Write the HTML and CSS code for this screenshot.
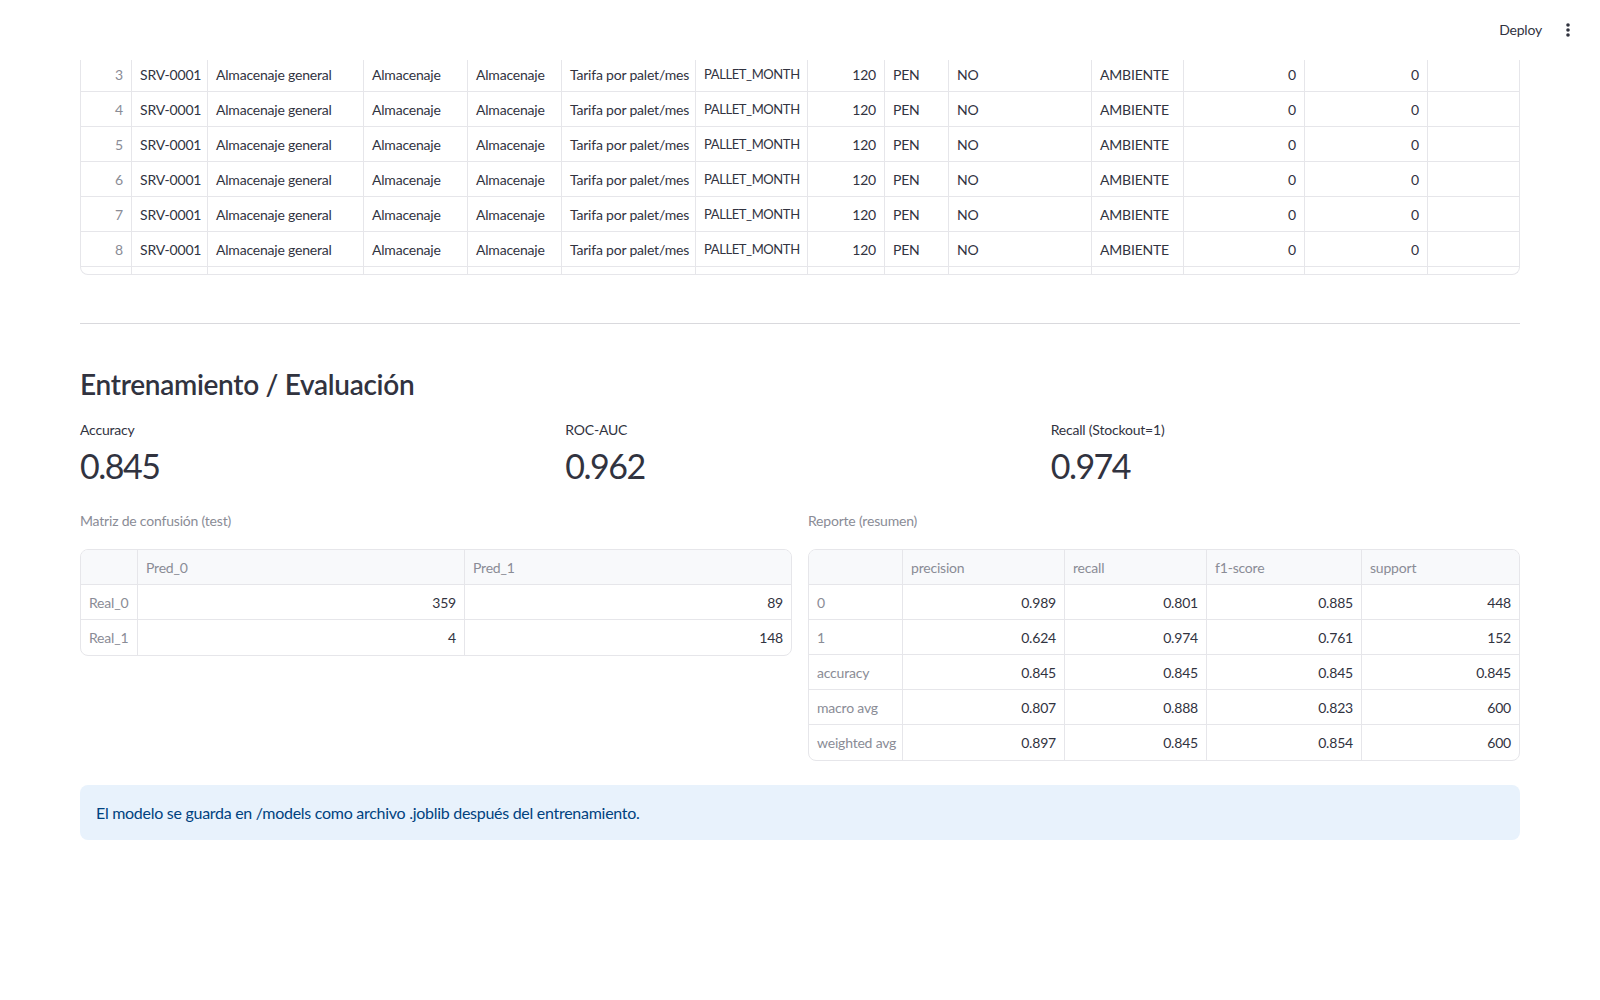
FILE: index.html
```html
<!DOCTYPE html>
<html lang="es">
  <head>
    <meta charset="UTF-8" />
    <meta name="viewport" content="width=device-width, initial-scale=1.0" />
    <title>Entrenamiento / Evaluación</title>
    <link rel="stylesheet" href="styles.css">
  </head>
  <body>
    <header class="app-header">
      <button class="deploy-btn">Deploy</button>
      <button class="menu-btn" aria-label="Menu">
        <svg width="24" height="24" viewBox="0 0 24 24">
          <circle cx="12" cy="7" r="1.8" fill="#31333f" />
          <circle cx="12" cy="12" r="1.8" fill="#31333f" />
          <circle cx="12" cy="17" r="1.8" fill="#31333f" />
        </svg>
      </button>
    </header>

    <main class="main">
      <!-- services dataframe, scrolled under the header -->
      <div class="frame frame-scrolled">
        <div class="row cols-services"><div class="cell idx num">3</div><div class="cell">SRV-0001</div><div class="cell">Almacenaje general</div><div class="cell">Almacenaje</div><div class="cell">Almacenaje</div><div class="cell">Tarifa por palet/mes</div><div class="cell code">PALLET_MONTH</div><div class="cell num">120</div><div class="cell">PEN</div><div class="cell">NO</div><div class="cell">AMBIENTE</div><div class="cell num">0</div><div class="cell num">0</div><div class="cell"></div></div>
        <div class="row cols-services"><div class="cell idx num">4</div><div class="cell">SRV-0001</div><div class="cell">Almacenaje general</div><div class="cell">Almacenaje</div><div class="cell">Almacenaje</div><div class="cell">Tarifa por palet/mes</div><div class="cell code">PALLET_MONTH</div><div class="cell num">120</div><div class="cell">PEN</div><div class="cell">NO</div><div class="cell">AMBIENTE</div><div class="cell num">0</div><div class="cell num">0</div><div class="cell"></div></div>
        <div class="row cols-services"><div class="cell idx num">5</div><div class="cell">SRV-0001</div><div class="cell">Almacenaje general</div><div class="cell">Almacenaje</div><div class="cell">Almacenaje</div><div class="cell">Tarifa por palet/mes</div><div class="cell code">PALLET_MONTH</div><div class="cell num">120</div><div class="cell">PEN</div><div class="cell">NO</div><div class="cell">AMBIENTE</div><div class="cell num">0</div><div class="cell num">0</div><div class="cell"></div></div>
        <div class="row cols-services"><div class="cell idx num">6</div><div class="cell">SRV-0001</div><div class="cell">Almacenaje general</div><div class="cell">Almacenaje</div><div class="cell">Almacenaje</div><div class="cell">Tarifa por palet/mes</div><div class="cell code">PALLET_MONTH</div><div class="cell num">120</div><div class="cell">PEN</div><div class="cell">NO</div><div class="cell">AMBIENTE</div><div class="cell num">0</div><div class="cell num">0</div><div class="cell"></div></div>
        <div class="row cols-services"><div class="cell idx num">7</div><div class="cell">SRV-0001</div><div class="cell">Almacenaje general</div><div class="cell">Almacenaje</div><div class="cell">Almacenaje</div><div class="cell">Tarifa por palet/mes</div><div class="cell code">PALLET_MONTH</div><div class="cell num">120</div><div class="cell">PEN</div><div class="cell">NO</div><div class="cell">AMBIENTE</div><div class="cell num">0</div><div class="cell num">0</div><div class="cell"></div></div>
        <div class="row cols-services"><div class="cell idx num">8</div><div class="cell">SRV-0001</div><div class="cell">Almacenaje general</div><div class="cell">Almacenaje</div><div class="cell">Almacenaje</div><div class="cell">Tarifa por palet/mes</div><div class="cell code">PALLET_MONTH</div><div class="cell num">120</div><div class="cell">PEN</div><div class="cell">NO</div><div class="cell">AMBIENTE</div><div class="cell num">0</div><div class="cell num">0</div><div class="cell"></div></div>
        <div class="row cols-services"><div class="cell idx num"></div><div class="cell"></div><div class="cell"></div><div class="cell"></div><div class="cell"></div><div class="cell"></div><div class="cell"></div><div class="cell"></div><div class="cell"></div><div class="cell"></div><div class="cell"></div><div class="cell"></div><div class="cell"></div><div class="cell"></div></div>
      </div>

      <hr class="divider" />

      <h3 class="section-title">Entrenamiento / Evaluación</h3>

      <div class="metrics">
        <div class="metric">
          <div class="metric-label">Accuracy</div>
          <div class="metric-value">0.845</div>
        </div>
        <div class="metric">
          <div class="metric-label">ROC-AUC</div>
          <div class="metric-value">0.962</div>
        </div>
        <div class="metric">
          <div class="metric-label">Recall (Stockout=1)</div>
          <div class="metric-value">0.974</div>
        </div>
      </div>

      <div class="two-cols">
        <section>
          <p class="caption">Matriz de confusión (test)</p>
          <div class="frame">
            <div class="row cols-confusion head"><div class="cell"></div><div class="cell">Pred_0</div><div class="cell">Pred_1</div></div>
            <div class="row cols-confusion"><div class="cell idx">Real_0</div><div class="cell num">359</div><div class="cell num">89</div></div>
            <div class="row cols-confusion"><div class="cell idx">Real_1</div><div class="cell num">4</div><div class="cell num">148</div></div>
          </div>
        </section>
        <section>
          <p class="caption">Reporte (resumen)</p>
          <div class="frame">
            <div class="row cols-report head"><div class="cell"></div><div class="cell">precision</div><div class="cell">recall</div><div class="cell">f1-score</div><div class="cell">support</div></div>
            <div class="row cols-report"><div class="cell idx">0</div><div class="cell num">0.989</div><div class="cell num">0.801</div><div class="cell num">0.885</div><div class="cell num">448</div></div>
            <div class="row cols-report"><div class="cell idx">1</div><div class="cell num">0.624</div><div class="cell num">0.974</div><div class="cell num">0.761</div><div class="cell num">152</div></div>
            <div class="row cols-report"><div class="cell idx">accuracy</div><div class="cell num">0.845</div><div class="cell num">0.845</div><div class="cell num">0.845</div><div class="cell num">0.845</div></div>
            <div class="row cols-report"><div class="cell idx">macro avg</div><div class="cell num">0.807</div><div class="cell num">0.888</div><div class="cell num">0.823</div><div class="cell num">600</div></div>
            <div class="row cols-report"><div class="cell idx">weighted avg</div><div class="cell num">0.897</div><div class="cell num">0.845</div><div class="cell num">0.854</div><div class="cell num">600</div></div>
          </div>
        </section>
      </div>

      <div class="alert-info">El modelo se guarda en /models como archivo .joblib después del entrenamiento.</div>
    </main>
  </body>
</html>
```

FILE: styles.css
```css
* {
  margin: 0;
  padding: 0;
  box-sizing: border-box;
}

body {
  font-family: Lato, "Source Sans Pro", sans-serif;
  color: #31333f;
  background: #fff;
  font-size: 14px;
}

.app-header {
  position: fixed;
  top: 0;
  left: 0;
  right: 0;
  height: 60px;
  background: #fff;
  display: flex;
  align-items: center;
  justify-content: flex-end;
  padding-right: 18px;
  padding-bottom: 1px;
  z-index: 10;
}

.deploy-btn {
  border: none;
  background: transparent;
  font-family: inherit;
  font-size: 14px;
  letter-spacing: -0.2px;
  color: #31333f;
  padding: 4px 12px;
  cursor: pointer;
}

.menu-btn {
  border: none;
  background: transparent;
  width: 28px;
  height: 28px;
  display: flex;
  align-items: center;
  justify-content: center;
  cursor: pointer;
}

.main {
  padding: 57px 80px 120px;
}

/* dataframe look */
.frame {
  border: 1px solid #e6e6ea;
  border-radius: 8px;
  overflow: hidden;
}

.frame-scrolled {
  height: 218px;
  border-top: none;
  border-radius: 0 0 8px 8px;
}

.row {
  display: grid;
  height: 35px;
  border-bottom: 1px solid #e6e6ea;
}

.frame .row:last-child {
  border-bottom: none;
}

.frame-scrolled .row:last-child {
  border-bottom: 1px solid #e6e6ea;
}

.cols-services {
  grid-template-columns: 51px 76px 156px 104px 94px 134px 112px 77px 64px 143px 92px 121px 123px 1fr;
}

.cols-confusion {
  grid-template-columns: 57px 327px 1fr;
}

.cols-report {
  grid-template-columns: 94px 162px 142px 155px 1fr;
}

.cell {
  display: flex;
  align-items: center;
  padding: 0 8px;
  border-right: 1px solid #e6e6ea;
  white-space: nowrap;
  overflow: hidden;
  letter-spacing: -0.2px;
}

.cell:last-child {
  border-right: none;
}

.cell.num {
  justify-content: flex-end;
}

.cell.idx {
  color: #8a8c96;
}

.cell.code {
  font-size: 13px;
  letter-spacing: -0.4px;
  padding-right: 4px;
}

.row.head {
  background: #f8f9fb;
  color: #8a8c96;
}

.divider {
  border: none;
  border-top: 1px solid #d9d9dd;
  margin-top: 48px;
}

.section-title {
  font-size: 28px;
  font-weight: 600;
  line-height: 34px;
  letter-spacing: -0.3px;
  margin-top: 43px;
}

.metrics {
  display: grid;
  grid-template-columns: repeat(3, 1fr);
  gap: 16px;
  margin-top: 17px;
}

.metric-label {
  font-size: 14px;
  line-height: 24px;
  letter-spacing: -0.2px;
}

.metric-value {
  font-size: 34px;
  line-height: 44px;
  letter-spacing: -1.5px;
  margin-top: 2px;
}

.two-cols {
  display: grid;
  grid-template-columns: 1fr 1fr;
  gap: 16px;
  margin-top: 22px;
  align-items: start;
}

.caption {
  color: #8a8c96;
  font-size: 14px;
  line-height: 21px;
  letter-spacing: -0.2px;
  margin-bottom: 18px;
}

.alert-info {
  margin-top: 24px;
  background: #e8f2fc;
  color: #004280;
  border-radius: 8px;
  padding: 16px;
  font-size: 16px;
  line-height: 23px;
  letter-spacing: -0.28px;
}
```
